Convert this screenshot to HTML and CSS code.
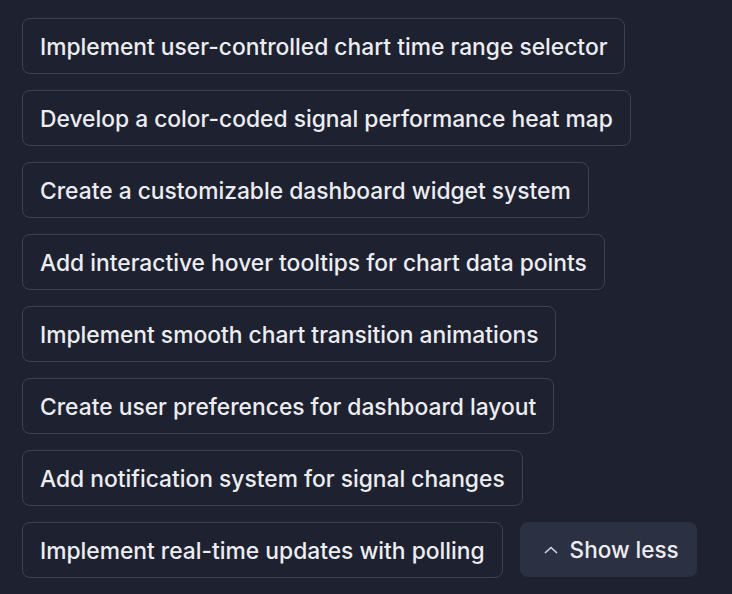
FILE: index.html
```html
<!DOCTYPE html>
<html>
<head>
<meta charset="utf-8">
<link rel="stylesheet" href="styles.css">
</head>
<body>
<div class="list">
  <button class="chip">Implement user-controlled chart time range selector</button>
  <button class="chip">Develop a color-coded signal performance heat map</button>
  <button class="chip">Create a customizable dashboard widget system</button>
  <button class="chip">Add interactive hover tooltips for chart data points</button>
  <button class="chip">Implement smooth chart transition animations</button>
  <button class="chip">Create user preferences for dashboard layout</button>
  <button class="chip">Add notification system for signal changes</button>
  <button class="chip">Implement real-time updates with polling</button>
  <button class="toggle"><svg class="chev" width="14" height="8" viewBox="0 0 14 8"><path d="M1 7L7 1.5L13 7" fill="none" stroke="currentColor" stroke-width="1.6"/></svg>Show less</button>
</div>
</body>
</html>
```
FILE: styles.css
```css
html, body {
  margin: 0;
  background: #1e2130;
}
body {
  padding: 18px 22px;
  font-family: Inter, "Noto Sans", sans-serif;
}
.list {
  display: flex;
  flex-wrap: wrap;
  gap: 16px 17px;
  width: 690px;
}
.chip {
  height: 56px;
  box-sizing: border-box;
  padding: 0 17px;
  background: #1e2130;
  border: 1.5px solid #3c4155;
  border-radius: 8px;
  color: #ecedf1;
  font-family: inherit;
  font-size: 22.8px;
  font-weight: 500;
}
.toggle {
  height: 55px;
  box-sizing: border-box;
  padding: 0 18px 0 24px;
  background: #2c3043;
  border: none;
  border-radius: 8px;
  color: #ecedf1;
  font-family: inherit;
  font-size: 22.5px;
  font-weight: 500;
  display: flex;
  align-items: center;
  gap: 12px;
}
.chev { color: #d6d8e0; }
```
